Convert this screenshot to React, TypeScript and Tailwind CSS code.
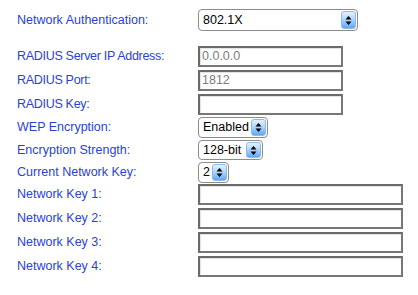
import React from 'react'

const font = { fontFamily: '"Liberation Sans", Arial, sans-serif' }

function Arrows() {
  return (
    <svg width="7" height="11" viewBox="0 0 7 11" className="block">
      <path d="M3.5 1 L6.5 4.5 L0.5 4.5 Z" fill="#000" />
      <path d="M3.5 10 L6.5 6.5 L0.5 6.5 Z" fill="#000" />
    </svg>
  )
}

function Select({ value, width, height = 21 }: { value: string; width: number; height?: number }) {
  return (
    <div
      className="flex items-stretch rounded-[4px] border border-[#8c8c8c] bg-white p-[1px]"
      style={{ width, height }}
    >
      <div className="flex flex-1 items-center whitespace-nowrap pl-[3px] text-[12.5px] text-black">{value}</div>
      <div className="flex w-[15px] items-center justify-center rounded-[3px] border border-[#8fb7e8] bg-gradient-to-b from-[#e4f2ff] via-[#a9d3ff] to-[#5ea7f2]">
        <Arrows />
      </div>
    </div>
  )
}

function TextBox({ value, width }: { value?: string; width: number }) {
  return (
    <div
      className="flex h-[21px] items-center whitespace-nowrap border-2 border-t-[#6a6a6a] border-l-[#6a6a6a] border-r-[#777] border-b-[#777] bg-white pl-[2px] text-[12.5px] text-[#7d7d7d] shadow-[inset_1px_1px_0_#e4e4e4]"
      style={{ width }}
    >
      {value}
    </div>
  )
}

function Row({ label, children, mt, tight }: { label: string; children: React.ReactNode; mt: string; tight?: boolean }) {
  return (
    <div className={`flex items-center ${mt}`}>
      <div className={`w-[181px] whitespace-nowrap text-[12.5px] text-[#2a3fd6] ${tight ? 'tracking-[-0.3px]' : ''}`}>{label}</div>
      {children}
    </div>
  )
}

export default function App() {
  return (
    <div className="h-[295px] w-[418px] bg-white pl-[17px] pt-[9px]" style={font}>
      <Row label="Network Authentication:" mt="mt-0">
        <Select value="802.1X" width={160} height={22} />
      </Row>
      <Row label="RADIUS Server IP Address:" mt="mt-[15px]" tight>
        <TextBox value="0.0.0.0" width={145} />
      </Row>
      <Row label="RADIUS Port:" mt="mt-[3px]" tight>
        <TextBox value="1812" width={145} />
      </Row>
      <Row label="RADIUS Key:" mt="mt-[3px]" tight>
        <TextBox width={145} />
      </Row>
      <Row label="WEP Encryption:" mt="mt-[2px]">
        <Select value="Enabled" width={70} />
      </Row>
      <Row label="Encryption Strength:" mt="mt-[2px]">
        <Select value="128-bit" width={65} height={20} />
      </Row>
      <Row label="Current Network Key:" mt="mt-[2px]">
        <Select value="2" width={31} />
      </Row>
      <Row label="Network Key 1:" mt="mt-[1px]">
        <TextBox width={205} />
      </Row>
      <Row label="Network Key 2:" mt="mt-[3px]">
        <TextBox width={205} />
      </Row>
      <Row label="Network Key 3:" mt="mt-[3px]">
        <TextBox width={205} />
      </Row>
      <Row label="Network Key 4:" mt="mt-[3px]">
        <TextBox width={205} />
      </Row>
    </div>
  )
}
